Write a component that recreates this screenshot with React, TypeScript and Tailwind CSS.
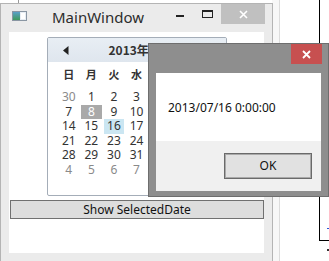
const UI = "font-['Segoe_UI','Noto_Sans','Noto_Sans_CJK_JP',sans-serif]";
const JP = "font-['Noto_Sans_CJK_JP',sans-serif]";

const DAYS = ["日", "月", "火", "水", "木", "金", "土"];

// July 2013, starting from Sunday 30 June
const WEEKS: { d: number; other?: boolean }[][] = [
  [{ d: 30, other: true }, { d: 1 }, { d: 2 }, { d: 3 }, { d: 4 }, { d: 5 }, { d: 6 }],
  [{ d: 7 }, { d: 8 }, { d: 9 }, { d: 10 }, { d: 11 }, { d: 12 }, { d: 13 }],
  [{ d: 14 }, { d: 15 }, { d: 16 }, { d: 17 }, { d: 18 }, { d: 19 }, { d: 20 }],
  [{ d: 21 }, { d: 22 }, { d: 23 }, { d: 24 }, { d: 25 }, { d: 26 }, { d: 27 }],
  [{ d: 28 }, { d: 29 }, { d: 30 }, { d: 31 }, { d: 1, other: true }, { d: 2, other: true }, { d: 3, other: true }],
  [{ d: 4, other: true }, { d: 5, other: true }, { d: 6, other: true }, { d: 7, other: true }, { d: 8, other: true }, { d: 9, other: true }, { d: 10, other: true }],
];

function AppIcon() {
  return (
    <svg width="15" height="10" viewBox="0 0 15 10">
      <defs>
        <linearGradient id="ic" x1="0" y1="0" x2="0" y2="1">
          <stop offset="0" stopColor="#5aa0c8" />
          <stop offset="1" stopColor="#3f9a5a" />
        </linearGradient>
      </defs>
      <rect x="0.5" y="0.5" width="14" height="9" fill="#e8eef4" stroke="#8a96a3" />
      <rect x="1" y="1" width="7" height="8" fill="url(#ic)" />
      <rect x="9" y="2" width="4" height="6" fill="#ffffff" />
    </svg>
  );
}

function Calendar() {
  return (
    <div className="mx-auto h-[159px] w-[180px] shrink-0 overflow-hidden rounded-[2px] border border-[#a4adb8] bg-white">
      <div className="flex h-[24px] items-center bg-gradient-to-b from-[#e8eef4] to-[#dfe6ee]">
        <svg width="6" height="9" viewBox="0 0 6 9" className="ml-[15px]">
          <path d="M5.5 0 L0 4.5 L5.5 9 Z" fill="#222" />
        </svg>
        <span className={`${JP} ml-[40px] text-[12px] font-bold text-[#333]`}>2013年7月</span>
      </div>
      <div className="mx-auto mt-[4px] w-[158px]">
        <div className="grid h-[16px] grid-cols-7 items-center">
          {DAYS.map((d) => (
            <span key={d} className={`${JP} text-center text-[11px] font-bold leading-none text-[#333]`}>
              {d}
            </span>
          ))}
        </div>
        <div className="mt-[8px]">
          {WEEKS.map((w, i) => (
            <div key={i} className="grid h-[14.5px] grid-cols-7">
              {w.map((c, j) => {
                const today = !c.other && c.d === 8;
                const selected = !c.other && c.d === 16;
                return (
                  <div key={j} className="flex h-full items-center justify-center px-[1px]">
                    <span
                      className={`${UI} flex h-full w-full items-center justify-center text-[12px] leading-none ${
                        today
                          ? "bg-[#a9a9a9] text-white"
                          : selected
                            ? "bg-[#cbe6f2] text-[#333]"
                            : c.other
                              ? "text-[#8a8a8a]"
                              : "text-[#333]"
                      }`}
                    >
                      {c.d}
                    </span>
                  </div>
                );
              })}
            </div>
          ))}
        </div>
      </div>
    </div>
  );
}

function MainWindow() {
  return (
    <div className="absolute left-0 top-[3px] flex h-[259px] w-[273px] flex-col border border-[#b4b4b4] bg-[#ebebeb]">
      <div className="flex h-[28px] shrink-0 items-start">
        <div className="ml-[11px] mt-[7px]">
          <AppIcon />
        </div>
        <span className={`${UI} ml-[25px] mt-[3px] text-[15px] leading-[20px] text-[#2d2d2d]`}>MainWindow</span>
        <div className="ml-auto mr-[7px] flex h-[20px] items-start">
          <div className="mr-[18px] mt-[11px] h-[2px] w-[8px] bg-[#222]" />
          <div className="mr-[8px] mt-[6px] h-[8px] w-[11px] border border-t-2 border-[#222]" />
          <div className="flex h-[20px] w-[44px] items-center justify-center bg-[#c0c0c0]">
            <svg width="9" height="9" viewBox="0 0 9 9">
              <path d="M1 1 L8 8 M8 1 L1 8" stroke="#fff" strokeWidth="1.6" />
            </svg>
          </div>
        </div>
      </div>
      <div className="mx-[8px] flex h-[221px] shrink-0 flex-col bg-white">
        <div className="mt-[5px]">
          <Calendar />
        </div>
        <button
          className={`${UI} ml-[1px] mt-[4px] h-[19px] border border-[#707070] bg-[#dddddd] text-[12px] leading-none text-[#111]`}
        >
          Show SelectedDate
        </button>
      </div>
    </div>
  );
}

function MessageBox() {
  return (
    <div className="absolute left-[148px] top-[43px] flex h-[154px] w-[181px] flex-col border border-[#6e6e6e] bg-[#8e8e8e]">
      <div className="flex h-[29px] shrink-0 items-start justify-end pr-[6px]">
        <div className="flex h-[20px] w-[31px] items-center justify-center bg-[#c75050]">
          <svg width="9" height="9" viewBox="0 0 9 9">
            <path d="M1 1 L8 8 M8 1 L1 8" stroke="#fff" strokeWidth="1.8" />
          </svg>
        </div>
      </div>
      <div className="mx-[7px] flex h-[118px] flex-col">
        <div className="flex h-[68px] items-center bg-white pl-[12px] pt-[2px]">
          <span className={`${UI} text-[12px] text-[#111]`}>2013/07/16 0:00:00</span>
        </div>
        <div className="flex flex-1 items-start justify-end bg-[#f0f0f0] pr-[9px] pt-[12px]">
          <button
            className={`${UI} h-[26px] w-[88px] border border-[#6a6a6a] bg-[#e1e1e1] text-[12px] text-[#111] shadow-[inset_0_0_0_1px_#a9a9a9]`}
          >
            OK
          </button>
        </div>
      </div>
    </div>
  );
}

export default function App() {
  return (
    <div className="relative h-[261px] w-[329px] overflow-hidden bg-white">
      {/* window behind, partly visible */}
      <div className="absolute left-[18px] top-0 h-[3px] w-px bg-[#9a9a9a]" />
      <div className="absolute left-[272px] top-0 h-[261px] w-[7px] bg-[#f7f7f7]" />
      <div className="absolute left-[279px] top-0 h-[261px] w-px bg-[#dcdcdc]" />
      <div className="absolute left-[319px] top-0 h-[241px] w-px bg-black" />
      <div className="absolute left-[319px] top-[240px] h-px w-[10px] bg-black" />
      <div className="absolute left-[327px] top-[228px] h-px w-[2px] bg-[#2a52d8]" />
      <div className="absolute left-[327px] top-[249px] h-[2px] w-[2px] bg-[#333]" />
      <MainWindow />
      <MessageBox />
    </div>
  );
}
